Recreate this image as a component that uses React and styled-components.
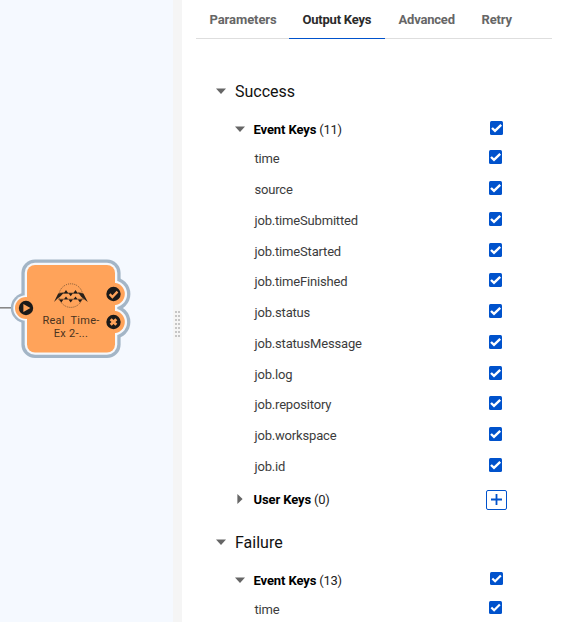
import React from "react";
import styled, { createGlobalStyle } from "styled-components";

const GlobalStyle = createGlobalStyle`
  * { box-sizing: border-box; }
  body { margin: 0; background: #fff; font-family: Roboto, "Liberation Sans", sans-serif; }
`;

const Page = styled.div`
  display: flex;
  width: 563px;
  height: 622px;
  overflow: hidden;
`;

const Canvas = styled.div`
  position: relative;
  flex: 0 0 173px;
  background: #f5f9ff;
`;

const NodeBox = styled.div`
  position: absolute;
  left: 0;
  top: 254px;
  width: 140px;
  height: 110px;
`;

const NodeLabel = styled.div`
  position: absolute;
  left: 27px;
  top: 60px;
  width: 88px;
  text-align: center;
  font-size: 11px;
  line-height: 13px;
  letter-spacing: 0.25px;
  color: #4a3320;
  white-space: pre;
`;

const Splitter = styled.div`
  flex: 0 0 9px;
  display: flex;
  align-items: center;
  justify-content: center;
  padding-top: 26px;
  background: #f5f5f5;
`;

const Panel = styled.div`
  flex: 1;
  background: #fff;
  padding-left: 14px;
`;

const Tabs = styled.div`
  display: flex;
  width: 356px;
  height: 39px;
  border-bottom: 1px solid #dedede;
`;

const Tab = styled.div`
  flex: 0 0 ${(p) => p.$width}px;
  height: 39px;
  padding-left: 13.5px;
  border-bottom: 1px solid ${(p) => (p.$active ? "#0052cc" : "transparent")};
  color: ${(p) => (p.$active ? "#2b2b2b" : "#666")};
  font-size: 13px;
  font-weight: 700;
  line-height: 39px;
  letter-spacing: ${(p) => p.$tracking || 0}px;
  white-space: nowrap;
`;

const Section = styled.section`
  padding-top: ${(p) => p.$top}px;
`;

const SectionTitle = styled.div`
  display: flex;
  align-items: center;
  height: 24px;
  padding-left: 20px;
  gap: 9px;
  font-size: 16px;
  color: #111;
`;

const GroupRow = styled.div`
  display: flex;
  align-items: center;
  height: 24px;
  margin-top: ${(p) => p.$top}px;
  padding-left: 39px;
`;

const GroupTitle = styled.div`
  width: 241px;
  padding-left: 8.5px;
  font-size: 13px;
  letter-spacing: -0.3px;
  color: #222;
  b { color: #000; letter-spacing: -0.1px; }
`;

const ControlCell = styled.div`
  display: flex;
  width: 21px;
  justify-content: center;
`;

const KeyList = styled.div`
  margin-top: ${(p) => p.$top}px;
  margin-bottom: ${(p) => 2 - p.$top}px;
`;

const KeyRow = styled.div`
  display: flex;
  align-items: center;
  height: 30.75px;
  padding-left: 58.5px;
  font-size: 13px;
  letter-spacing: -0.18px;
  color: #3c3c3c;
`;

const KeyName = styled.div`
  width: 234.5px;
`;

const Check = styled.span`
  display: flex;
  width: 13px;
  height: ${(p) => p.$height}px;
  margin-bottom: ${(p) => p.$lift || 0}px;
  border-radius: 1.5px;
  background: #0052cc;
`;

const AddButton = styled.button`
  display: flex;
  align-items: center;
  justify-content: center;
  width: 21px;
  height: 20px;
  margin-top: 1px;
  padding: 0;
  border: 1px solid #0052cc;
  border-radius: 2px;
  background: #fff;
`;

const CheckBox = ({ lift, height = 14 }) => (
  <Check $lift={lift} $height={height}>
    <svg width="13" height={height} viewBox="0 0 13 14" fill="none">
      <path d="M2 7 5 9.9 11.2 3.8" stroke="#fff" strokeWidth="2.4" />
    </svg>
  </Check>
);

const Caret = ({ closed }) => (
  <svg width="10" height="10" viewBox="0 0 10 10" fill="#666">
    <path d={closed ? "M2.4 0 7.6 5 2.4 10Z" : "M0 2.6H10L5 8Z"} />
  </svg>
);

const Outline = ({ grow, fill }) => (
  <g fill={fill}>
    <rect x={27 - grow} y={11 - grow} width={88 + grow * 2} height={87.5 + grow * 2} rx={8 + grow} />
    <circle cx="26" cy="54" r={11 + grow * 0.75} />
    <circle cx="113.5" cy="40" r={11.3 + grow} />
    <circle cx="113.5" cy="68" r={11.3 + grow} />
  </g>
);

const FlowNode = () => (
  <NodeBox>
    <svg width="140" height="110" viewBox="0 0 140 110">
      <path d="M0 53.8H14" stroke="#888" strokeWidth="1.6" />
      <Outline grow={5.6} fill="#a3b5c6" />
      <Outline grow={2.3} fill="#f5f8fc" />
      <Outline grow={0} fill="#ffa35a" />
      <g fill="#1c1a19">
        <circle cx="26" cy="54" r="7.2" />
        <circle cx="113.5" cy="40" r="7.2" />
        <circle cx="113.5" cy="68" r="7.2" />
      </g>
      <path d="M23.4 50 30.4 54 23.4 58Z" fill="#ffa35a" />
      <path d="M109.7 40.2 112.4 43 117.5 37.6" stroke="#ffa35a" strokeWidth="2.4" fill="none" />
      <path d="M110.7 65.2 116.3 70.8M116.3 65.2 110.7 70.8" stroke="#ffa35a" strokeWidth="2.8" />
      <circle cx="70.8" cy="41.6" r="11.8" fill="none" stroke="#6b4c30" strokeWidth=".9" strokeDasharray="1 1.1" />
      <g fill="#2a211a">
        <path d="M54 48 58.2 39.4 64 38.4 60.6 42.2 57.6 44.4Z" />
        <path d="M87.8 48 83.4 39.4 78 38.4 81.2 42.8 84.2 45.2Z" />
      </g>
      <path d="M60 39.2H81.5" fill="none" stroke="#3a2b1f" strokeWidth=".8" />
      <path d="M58 45.2H84" fill="none" stroke="#3a2b1f" strokeWidth=".5" />
      <g fill="#201a16">
        {[66, 75.5].map((x) => (
          <path key={x} d={`M${x - 2.2} 39.2 L${x} 36 L${x + 2.2} 39.2Z M${x - 2} 45.2 L${x} 42.4 L${x + 2} 45.2Z`} />
        ))}
        {[61.3, 70.7, 80].map((x) => (
          <path key={x} d={`M${x - 2.2} 45.4H${x + 2.2}L${x} 48.6Z`} />
        ))}
        <path d="M68.5 39.2H72.9L70.7 42.2Z" />
      </g>
    </svg>
    <NodeLabel>{"Real  Time-\nEx 2-..."}</NodeLabel>
  </NodeBox>
);

const Grip = () => (
  <svg width="5" height="28" viewBox="0 0 5 28" fill="#c6c6c6">
    {[0, 1, 2, 3, 4, 5, 6].map((i) => (
      <path key={i} d={`M0 ${i * 4 + 1}h2v2h-2zM3 ${i * 4 + 1}h2v2h-2z`} />
    ))}
  </svg>
);

const Group = ({ title, count, keys, top, listTop, checkHeight }) => (
  <>
    <GroupRow $top={top}>
      <Caret />
      <GroupTitle><b>{title}</b> ({count})</GroupTitle>
      <ControlCell><CheckBox lift={checkHeight === 13 ? 3 : 2} height={checkHeight} /></ControlCell>
    </GroupRow>
    <KeyList $top={listTop}>
      {keys.map((name) => (
        <KeyRow key={name}>
          <KeyName>{name}</KeyName>
          <CheckBox lift={3} height={checkHeight} />
        </KeyRow>
      ))}
    </KeyList>
  </>
);

const successKeys = [
  "time", "source", "job.timeSubmitted", "job.timeStarted", "job.timeFinished", "job.status",
  "job.statusMessage", "job.log", "job.repository", "job.workspace", "job.id",
];

export default function App() {
  return (
    <>
      <GlobalStyle />
      <Page>
        <Canvas><FlowNode /></Canvas>
        <Splitter><Grip /></Splitter>
        <Panel>
          <Tabs>
            <Tab $width={93} $tracking={-0.08}>Parameters</Tab>
            <Tab $width={96} $tracking={-0.22} $active>Output Keys</Tab>
            <Tab $width={83} $tracking={-0.2}>Advanced</Tab>
            <Tab $width={60} $tracking={-0.15}>Retry</Tab>
          </Tabs>
          <Section $top={40}>
            <SectionTitle><Caret />Success</SectionTitle>
            <Group title="Event Keys" count={11} keys={successKeys} top={14} listTop={2.4} />
            <GroupRow $top={6}>
              <Caret closed />
              <GroupTitle><b>User Keys</b> (0)</GroupTitle>
              <ControlCell>
                <AddButton aria-label="Add user key">
                  <svg width="11" height="11" viewBox="0 0 11 11">
                    <path d="M5.5 0V11M0 5.5H11" stroke="#0052cc" strokeWidth="1.8" />
                  </svg>
                </AddButton>
              </ControlCell>
            </GroupRow>
          </Section>
          <Section $top={19}>
            <SectionTitle><Caret />Failure</SectionTitle>
            <Group title="Event Keys" count={13} keys={["time"]} top={14} listTop={1.6} checkHeight={13} />
          </Section>
        </Panel>
      </Page>
    </>
  );
}
